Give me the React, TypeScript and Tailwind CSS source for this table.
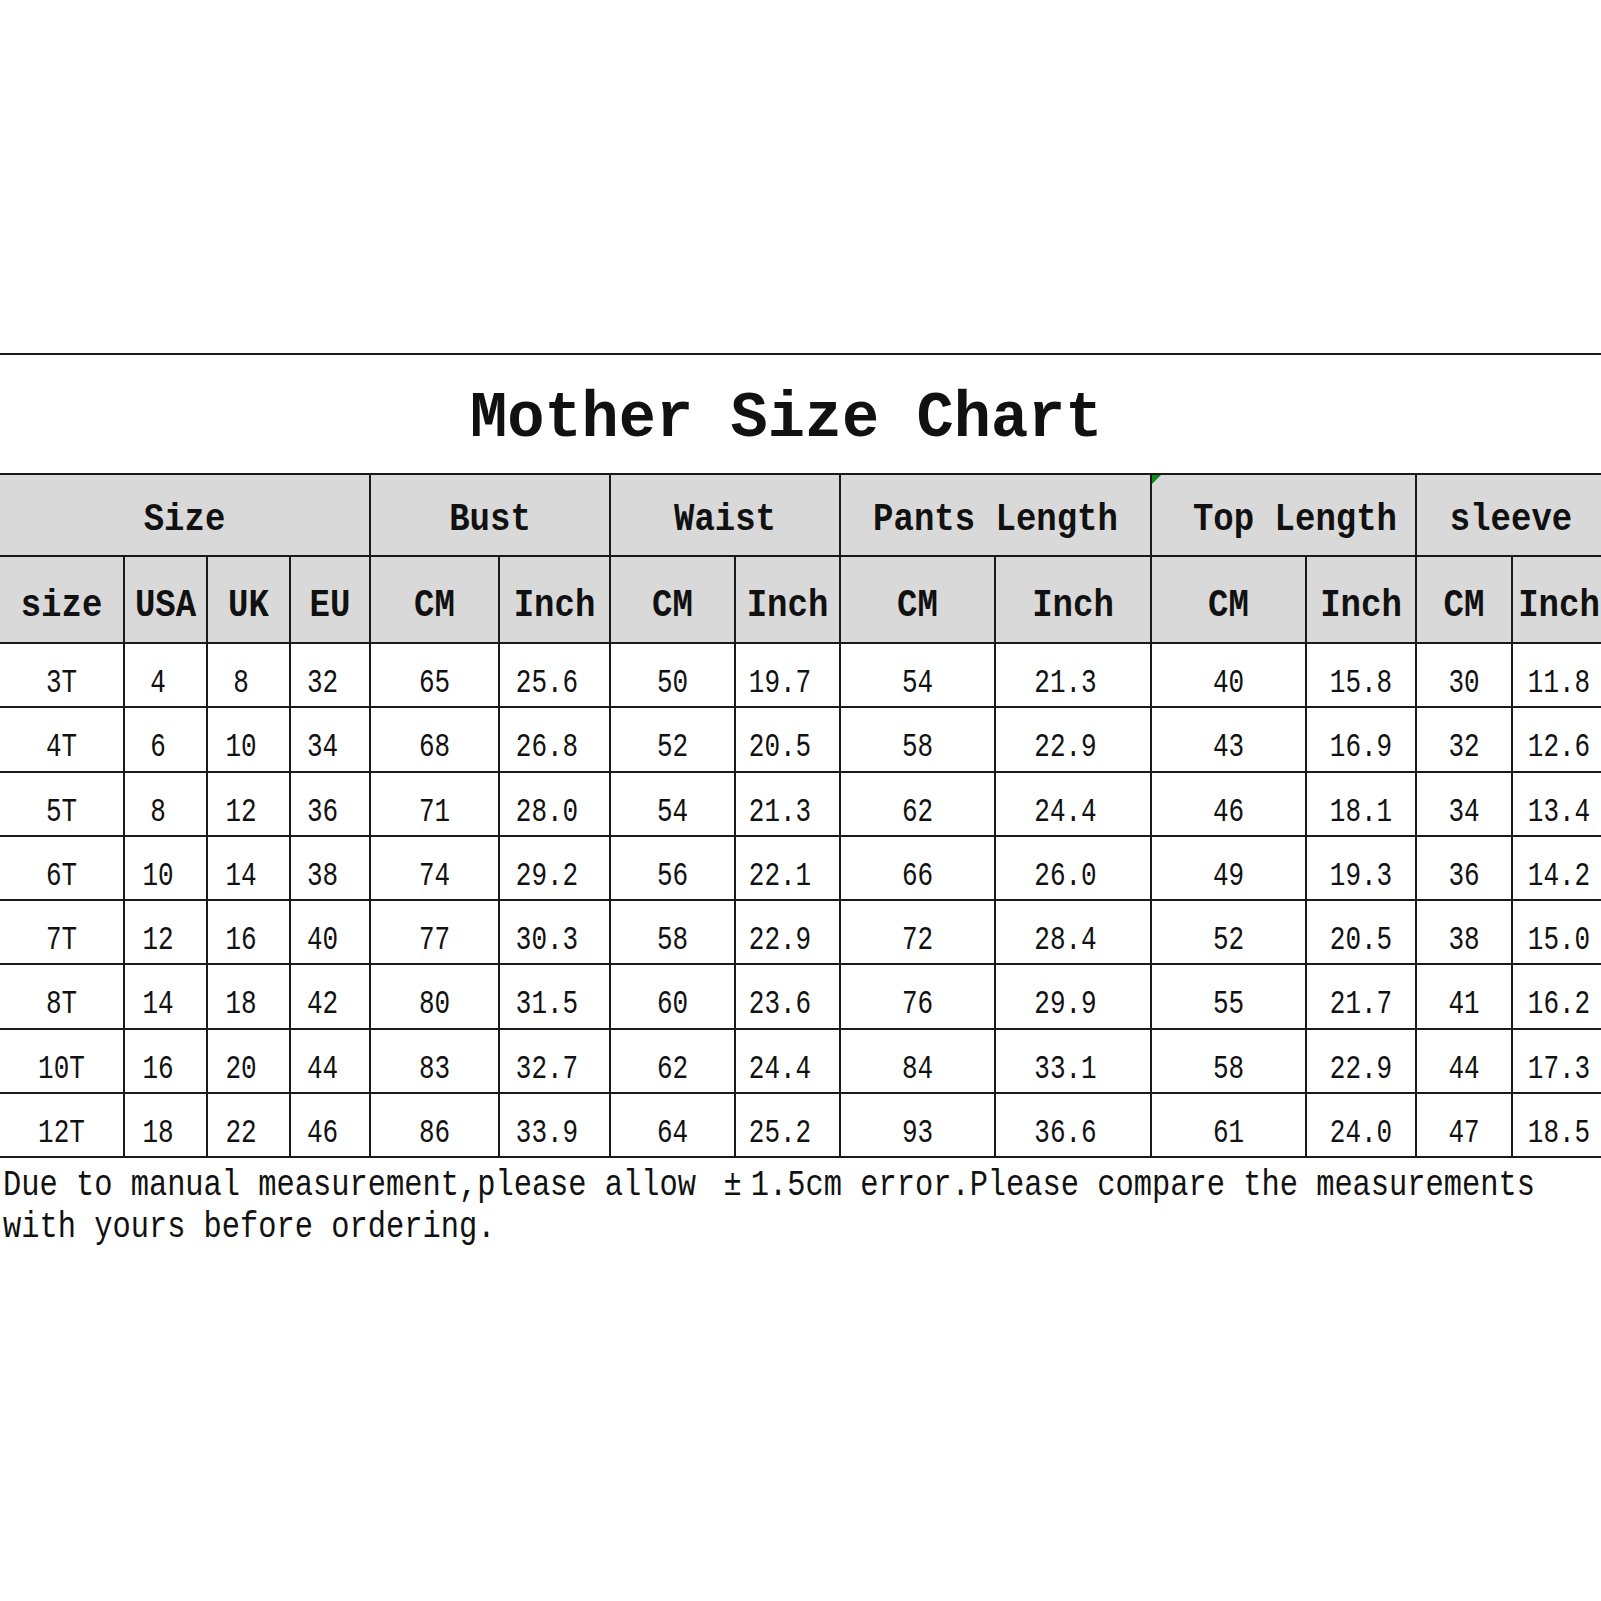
const mono = "font-['Liberation_Mono',monospace]";

const rows: string[][] = [
  ['3T', '4', '8', '32', '65', '25.6', '50', '19.7', '54', '21.3', '40', '15.8', '30', '11.8'],
  ['4T', '6', '10', '34', '68', '26.8', '52', '20.5', '58', '22.9', '43', '16.9', '32', '12.6'],
  ['5T', '8', '12', '36', '71', '28.0', '54', '21.3', '62', '24.4', '46', '18.1', '34', '13.4'],
  ['6T', '10', '14', '38', '74', '29.2', '56', '22.1', '66', '26.0', '49', '19.3', '36', '14.2'],
  ['7T', '12', '16', '40', '77', '30.3', '58', '22.9', '72', '28.4', '52', '20.5', '38', '15.0'],
  ['8T', '14', '18', '42', '80', '31.5', '60', '23.6', '76', '29.9', '55', '21.7', '41', '16.2'],
  ['10T', '16', '20', '44', '83', '32.7', '62', '24.4', '84', '33.1', '58', '22.9', '44', '17.3'],
  ['12T', '18', '22', '46', '86', '33.9', '64', '25.2', '93', '36.6', '61', '24.0', '47', '18.5'],
];

// columns whose numbers sit a half char left of centre (trailing space in the sheet)
const shifted = [false, true, true, true, false, true, false, true, false, true, false, false, false, false];

const groups = [
  { label: 'Size', span: 'col-span-4', extra: '' },
  { label: 'Bust', span: 'col-span-2', extra: '' },
  { label: 'Waist', span: 'col-span-2', extra: '' },
  { label: 'Pants Length', span: 'col-span-2', extra: '' },
  { label: 'Top Length', span: 'col-span-2', extra: 'pl-[23px]' },
  { label: 'sleeve', span: 'col-span-2', extra: '' },
];

const subHeads = ['size', 'USA', 'UK', 'EU', 'CM', 'Inch', 'CM', 'Inch', 'CM', 'Inch', 'CM', 'Inch', 'CM', 'Inch'];

export default function App() {
  return (
    <div className={`w-[1601px] h-[1601px] overflow-hidden bg-white text-[#111] ${mono}`}>
      <div className="pt-[353px]">
        <div className="border-t-2 border-[#1a1a1a]" />

        {/* title */}
        <div className="h-[118px] flex items-center pl-[470px] pt-[9px]">
          <span className="inline-block text-[62px] leading-none font-bold scale-y-[1.06] whitespace-pre">
            Mother Size Chart
          </span>
        </div>

        {/* table */}
        <div className="border-y-2 border-[#1a1a1a] w-[1605px]">
          <div className="grid gap-[2px] bg-[#1a1a1a] grid-cols-[123px_81px_81px_78px_127px_109px_123px_103px_153px_154px_153px_108px_94px_92px] grid-rows-[80px_85px_repeat(8,62.25px)]">
            {groups.map((g) => (
              <div
                key={g.label}
                className={`${g.span} ${g.extra} relative bg-[#d9d9d9] flex items-center justify-center pt-[10px]`}
              >
                {g.label === 'Top Length' && (
                  <svg className="absolute top-0 left-0" width="9" height="9" viewBox="0 0 9 9">
                    <polygon points="0,0 9,0 0,9" fill="#0f8a1c" />
                  </svg>
                )}
                <span className="inline-block text-[34px] leading-none font-bold scale-y-[1.12] whitespace-pre">
                  {g.label}
                </span>
              </div>
            ))}

            {subHeads.map((h, i) => (
              <div key={'h' + i} className="bg-[#d9d9d9] flex items-center justify-center pt-[12px]">
                <span className="inline-block text-[34px] leading-none font-bold scale-y-[1.12]">{h}</span>
              </div>
            ))}

            {rows.map((r, ri) =>
              r.map((v, ci) => (
                <div
                  key={ri + '-' + ci}
                  className={`bg-white flex items-center justify-center pt-[16px] ${shifted[ci] ? 'pr-[15px]' : ''}`}
                >
                  <span className="inline-block text-[26px] leading-none scale-y-[1.3]">{v}</span>
                </div>
              ))
            )}
          </div>
        </div>

        {/* note */}
        <div className="pt-[6px] pl-[3px] text-[30.4px]">
          <div className="h-[42px] leading-[42px]">
            <span className="inline-block scale-y-[1.2] whitespace-pre">
              Due to manual measurement,please allow{' '}
              <span className="inline-block w-[36.5px] text-center">±</span>
              1.5cm error.Please compare the measurements
            </span>
          </div>
          <div className="h-[42px] leading-[42px]">
            <span className="inline-block scale-y-[1.2] whitespace-pre">with yours before ordering.</span>
          </div>
        </div>
      </div>
    </div>
  );
}
